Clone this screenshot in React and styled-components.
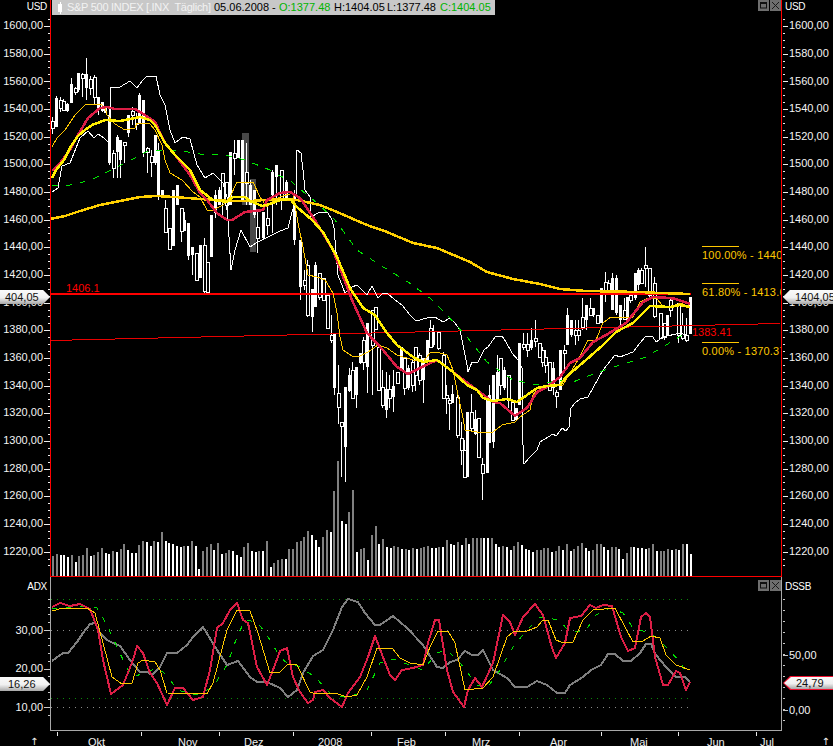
import React from 'react';
import styled, { createGlobalStyle } from 'styled-components';

const Global = createGlobalStyle`
  html, body { margin: 0; padding: 0; background: #000; overflow: hidden; }
  body { font-family: "Liberation Sans", Arial, sans-serif; font-size: 11px; color: #fff; }
`;

/* ---------- data (page pixel coordinates) ---------- */
const pts = (a) => a.map((p) => p.join(',')).join(' ');

const whiteBand = [[52,192],[58,188],[62,166],[70,163],[76,148],[80,138],[88,131],[94,138],[98,134],[104,138],[108,142],[110,130],[111,87],[120,87],[125,84],[130,81],[137,88],[143,80],[147,76],[156,76],[160,95],[165,105],[170,130],[175,143],[183,137],[190,139],[197,165],[205,178],[213,173],[223,183],[227,197],[228,220],[231,270],[235,250],[241,230],[250,247],[256,243],[266,238],[280,231],[288,228],[296,197],[297,150],[301,153],[303,170],[305,190],[310,197],[311,217],[320,212],[328,213],[332,220],[334,228],[335,240],[338,275],[345,293],[352,287],[357,285],[362,290],[367,295],[372,286],[378,298],[383,293],[387,293],[395,300],[402,305],[410,315],[415,320],[420,320],[430,317],[435,317],[443,322],[450,318],[455,323],[460,330],[463,345],[467,365],[468,372],[472,362],[478,362],[484,350],[488,347],[495,337],[502,336],[506,342],[512,353],[518,360],[522,368],[522,425],[524,464],[530,457],[537,450],[540,442],[548,437],[553,434],[556,436],[560,431],[562,428],[566,431],[569,427],[571,408],[575,403],[580,399],[584,398],[588,397],[603,370],[615,355],[620,357],[633,352],[640,343],[646,336],[653,337],[656,342],[663,337],[680,333],[686,335]];
const ma200 = [[50,219],[55,218],[65,216],[80,211],[100,205],[120,201],[140,197],[156,196],[175,197],[200,199],[230,201],[250,201],[280,199],[297,200],[320,205],[337,212],[367,225],[387,232],[413,243],[437,248],[470,262],[487,272],[513,279],[540,284],[560,289],[586,291],[640,292],[660,293],[690,294]];
const yellowMa = [[52,178],[56,170],[64,160],[70,148],[78,136],[85,130],[92,125],[100,122],[105,120],[120,121],[130,119],[140,117],[150,120],[155,125],[165,143],[175,155],[190,170],[200,190],[213,200],[227,202],[233,197],[245,197],[250,201],[262,206],[270,204],[280,200],[290,199],[297,207],[312,220],[323,232],[337,257],[350,288],[363,308],[375,315],[387,333],[397,345],[413,357],[423,362],[437,360],[453,372],[467,385],[477,390],[483,398],[493,401],[507,399],[517,402],[537,388],[547,386],[560,385],[566,377],[586,360],[603,345],[616,332],[633,323],[650,306],[670,307],[680,305],[690,307]];
const redMa = [[52,171],[60,163],[70,150],[78,135],[88,118],[100,108],[107,107],[115,109],[135,109],[145,115],[155,122],[165,143],[175,155],[190,175],[200,193],[207,200],[217,213],[227,220],[232,220],[245,212],[263,210],[267,200],[280,193],[290,192],[300,198],[313,217],[333,250],[352,300],[367,333],[383,350],[397,367],[408,374],[420,368],[437,360],[453,372],[477,390],[493,402],[500,403],[515,416],[527,408],[537,392],[547,387],[560,377],[570,363],[580,358],[593,342],[606,335],[626,323],[643,302],[653,297],[670,298],[676,299],[690,304]];
const goldThin = [[52,147],[57,138],[65,130],[75,115],[85,105],[100,104],[105,107],[107,115],[115,124],[125,130],[135,128],[137,123],[140,123],[150,124],[155,130],[162,145],[165,160],[170,173],[182,180],[193,192],[200,197],[207,210],[213,210],[223,205],[230,197],[237,182],[253,182],[260,197],[267,207],[275,200],[280,197],[293,193],[298,223],[303,247],[308,275],[317,277],[325,280],[333,293],[337,313],[340,337],[343,350],[352,356],[360,356],[368,352],[378,345],[387,348],[397,355],[413,360],[423,362],[430,353],[437,352],[447,355],[453,370],[457,390],[463,418],[465,430],[477,432],[493,432],[502,425],[515,422],[520,417],[530,410],[533,395],[538,387],[563,385],[578,360],[588,340],[596,340],[603,323],[611,317],[633,317],[640,302],[648,298],[656,298],[663,306],[671,307],[680,303],[690,307]];
const greenMa = [[52,185],[65,186],[80,183],[95,178],[115,168],[135,158],[150,150],[175,150],[200,154],[225,155],[245,160],[270,170],[280,176],[290,180],[297,187],[305,193],[317,203],[335,220],[357,250],[380,265],[408,282],[430,298],[447,315],[467,337],[487,362],[513,380],[537,385],[560,380],[573,382],[596,373],[620,365],[646,357],[666,345],[686,333]];
const adxGray = [[52,661],[63,653],[68,653],[77,642],[83,633],[90,624],[95,623],[100,633],[107,640],[113,643],[120,646],[130,660],[140,672],[147,672],[152,675],[160,667],[167,653],[177,653],[187,645],[193,637],[203,627],[217,650],[227,665],[238,661],[250,677],[257,682],[267,682],[280,688],[288,697],[297,690],[303,673],[313,656],[323,650],[333,630],[342,607],[348,599],[358,602],[365,613],[375,625],[380,625],[393,616],[407,628],[423,645],[437,667],[443,668],[450,662],[457,660],[465,651],[472,655],[478,655],[483,650],[493,670],[507,678],[515,687],[527,687],[537,681],[547,685],[557,693],[565,693],[570,685],[583,677],[591,670],[601,665],[608,654],[615,654],[623,661],[631,661],[640,653],[646,644],[651,644],[656,655],[666,667],[676,677],[685,677],[690,682]];
const adxRed = [[52,607],[60,603],[70,606],[80,604],[90,609],[98,630],[103,660],[111,694],[123,685],[133,660],[137,646],[143,653],[150,673],[157,683],[167,705],[175,688],[183,688],[193,700],[203,697],[210,670],[217,628],[223,623],[230,610],[237,603],[243,620],[248,623],[257,667],[267,685],[273,670],[280,651],[287,648],[293,677],[300,692],[308,703],[313,700],[315,692],[323,690],[330,698],[342,707],[348,693],[360,677],[368,657],[375,636],[383,657],[390,675],[395,680],[402,670],[413,668],[423,665],[428,643],[435,620],[439,620],[447,670],[453,692],[464,707],[468,690],[475,678],[482,687],[493,663],[503,615],[510,622],[515,635],[523,617],[535,604],[543,615],[552,648],[556,658],[565,643],[570,618],[581,616],[590,605],[596,608],[603,605],[612,606],[621,637],[628,651],[635,648],[641,617],[646,613],[650,617],[655,657],[663,685],[668,685],[676,671],[680,673],[686,690],[690,682]];
const adxGold = [[52,611],[63,608],[87,608],[95,613],[103,643],[112,677],[122,684],[132,683],[138,663],[143,660],[155,662],[160,670],[167,693],[207,694],[213,683],[227,630],[237,610],[250,611],[258,633],[270,673],[280,672],[288,664],[297,665],[310,692],[313,693],[335,693],[347,697],[357,695],[367,677],[377,648],[392,648],[400,658],[410,663],[423,665],[430,647],[438,631],[448,631],[455,643],[465,690],[483,688],[493,677],[507,637],[513,632],[527,631],[537,627],[543,620],[548,620],[556,640],[561,642],[573,642],[583,620],[593,610],[615,608],[625,627],[633,642],[643,641],[651,636],[660,638],[666,655],[676,665],[690,670]];
const adxGreen = [[52,609],[83,606],[97,608],[107,625],[117,647],[127,668],[133,677],[147,672],[157,668],[167,675],[177,690],[197,695],[213,687],[227,665],[237,637],[245,620],[257,622],[267,635],[280,657],[287,663],[300,667],[315,677],[330,693],[347,698],[367,690],[380,663],[393,659],[410,665],[423,670],[437,653],[447,650],[460,663],[477,685],[487,688],[500,670],[513,647],[527,630],[540,617],[560,620],[566,628],[575,632],[586,630],[596,615],[610,608],[623,613],[633,628],[646,632],[653,635],[666,647],[681,663],[688,677]];

/* x, high, low, bodyTop, bodyBottom, filled */
const candles = [
[52,117,134,121,128,0],[56,96,127,98,127,1],[60,97,112,100,108,0],[63,99,111,101,110,0],[67,103,112,104,111,1],[71,78,103,84,103,1],[75,87,95,88,92,0],[78,73,92,73,90,1],[82,73,97,74,78,0],[86,58,100,74,88,1],[90,76,95,79,88,0],[94,75,105,77,97,0],[98,97,115,97,108,1],[102,102,112,102,111,1],[105,107,113,107,113,1],[109,107,165,115,163,1],[113,150,178,153,168,0],[117,135,178,137,152,1],[120,140,178,140,160,1],[124,142,163,142,145,0],[128,115,137,115,133,1],[132,107,125,111,115,0],[136,113,130,118,124,0],[139,93,123,95,123,1],[143,100,157,100,153,1],[147,147,173,148,152,0],[151,150,177,156,162,0],[155,135,165,135,163,1],[158,143,200,150,195,1],[162,190,197,190,196,1],[165,200,232,208,232,0],[169,228,249,228,249,0],[173,190,246,190,246,1],[177,185,205,185,205,1],[181,208,242,208,231,0],[184,212,231,220,231,1],[188,223,260,223,256,1],[192,247,275,247,255,1],[196,253,280,253,280,0],[200,245,278,245,278,1],[204,238,293,245,291,0],[207,262,292,262,292,0],[211,215,257,215,257,1],[215,190,218,195,213,1],[219,187,205,190,205,1],[222,173,215,173,200,0],[226,182,210,182,205,0],[230,152,205,152,205,1],[234,140,175,153,158,0],[238,140,158,140,158,1],[242,140,200,140,200,1],[246,143,205,172,183,0],[250,180,205,185,205,1],[254,190,218,190,215,1],
[257,212,253,227,238,0],[263,212,240,212,238,1],[267,205,235,218,225,0],[272,170,233,172,195,1],[276,165,205,165,177,1],[281,170,210,170,200,0],[286,180,200,182,198,1],
[294,190,245,208,240,1],[300,240,300,240,287,1],[304,270,290,280,285,0],[307,260,317,265,315,0],[312,289,332,289,317,1],[315,262,307,265,307,1],[319,273,300,273,297,0],[323,278,300,278,300,0],[327,295,328,295,328,0],[331,315,343,335,340,0],
[334,333,395,333,388,1],[338,365,424,393,407,0],[341,422,477,422,426,0],[345,387,482,387,447,1],[349,368,392,375,391,1],[352,362,399,370,398,0],[356,367,408,367,395,1],[360,353,364,353,363,1],[363,337,370,340,362,0],[367,323,393,323,367,1],[372,310,395,310,345,0],[375,307,330,307,329,0],[378,347,391,347,390,0],[382,370,408,387,405,0],[386,372,418,389,410,1],[389,375,408,389,398,0],[393,370,412,386,397,1],[397,372,383,372,383,0],[401,347,370,347,370,1],[404,357,395,358,388,0],[408,365,390,368,388,1],[412,360,392,362,385,0],[415,347,391,347,375,0],[419,353,385,355,380,0],[423,358,403,358,380,1],[427,340,360,340,360,1],[430,320,347,328,347,0],[433,325,347,331,345,1],[438,332,350,332,348,0],[443,352,398,355,398,0],[446,385,414,395,398,0],[449,398,430,400,403,0],[452,385,403,394,403,1],[457,395,438,397,435,0],[461,422,465,438,450,0],[464,440,478,450,477,0],[467,412,477,412,477,1],[471,394,432,412,428,0],[475,410,435,419,434,1],[478,418,458,418,457,0],[482,458,500,464,473,0],[487,398,473,400,473,1],[489,385,443,395,443,1],[493,375,448,375,442,1],[497,355,400,372,400,1],[500,358,395,358,385,0],[504,367,390,370,388,1],[508,375,408,375,400,0],[512,402,420,402,420,0],[516,408,420,408,420,1],[519,343,405,343,405,1],[523,333,350,344,347,0],[527,333,357,344,350,0],[531,328,350,340,348,1],[535,320,347,338,341,0],[539,343,357,343,357,0],[542,347,367,350,362,0],[545,350,373,357,365,0],[549,362,390,362,390,0],[553,362,395,368,388,1],[556,390,408,392,396,0],[560,350,390,350,390,1],[564,345,370,350,353,0],[567,308,345,315,345,1],[571,320,337,320,335,1],[575,320,345,330,335,0],[578,320,341,330,335,0],[582,298,330,317,327,0],[586,305,330,305,320,1],[590,298,315,308,315,0],[593,308,317,308,315,1],[597,315,323,315,323,0],[601,288,323,288,323,1],[605,272,302,282,290,0],[608,280,295,283,291,0],[612,273,310,278,310,1],[616,275,315,278,313,1],[620,305,327,305,320,1],[624,298,320,310,319,0],[627,297,323,297,320,1],[630,295,303,295,300,0],[635,273,300,273,298,1],[638,268,290,270,285,1],[641,268,283,270,283,0],[645,247,287,265,268,0],[649,268,297,268,295,0],[654,277,318,283,316,0],[660,313,338,313,338,0],[664,323,340,323,337,0],[667,315,335,315,335,1],[670,297,317,300,310,0],[678,303,343,303,335,0],[682,313,340,325,338,0],[686,318,342,335,340,0],[690,297,334,297,334,1],
];

const volumes = `513g 507g 510w 510w 516w 510g 531w 514g 510g 489g 513w 510g 501g 489g 504w 507w 498g 501w 492g 477g 495w 504w 504w 480g 468g 471w 483w 468g 471w 441g 468w 474w 477w 483w 486w 483g 483w 468g 483w 552w 498g 486g 477g 495w 474g 507w 504g 495g 498w 510w 516w 486g 474g 498w 501w 498g 498w 468g 546w 534g
525g 522g 522w 492g 492g 471g 468g 456g 438g 450w 465w 486w 456g 435g 441w 318g 228g 408w 417w 381g 315g 501w 492g 489g 525w 450g 423g 477w 462g 486w 489w 483g 486g 492w 492g 495w 489g 492w 489g 486g 483g 489w 489w 486g 486w 465g 477w 480w 471g 480w 459g 477w 459g 459g 459g 459w 459w 459g 477w 486w 483g 486w 495w 483g 471g 480w 492w 495w 501w 495g 495g 489g 489g 501w
498g 483g 495w 477g 498w 492g 483g 474g 489w 498w 495g 477g 477g 486w 495w 486g 486g 492w 522w 504g 486g 486w 489w 489w 492w 489g 477g 498w 498g 498g 492g 495w 492g 495w 477g 477w 507w`
  .split(/\s+/)
  .map((s) => ({ y: 385 + parseInt(s, 10) / 3, white: s.endsWith('w') }));

const range = (from, to, step) => {
  const out = [];
  for (let v = from; v <= to + 0.01; v += step) out.push(v);
  return out;
};

const priceLabels = range(0, 19, 1).map((i) => `${1600 - i * 20},00`);

const months = [
  { label: 'Okt', w: 84, left: 31 },
  { label: 'Nov', w: 78, left: 37 },
  { label: 'Dez', w: 74, left: 25 },
  { label: '2008', w: 78, left: 25 },
  { label: 'Feb', w: 74, left: 26 },
  { label: 'Mrz', w: 74, left: 27 },
  { label: 'Apr', w: 82, left: 31 },
  { label: 'Mai', w: 77, left: 29 },
  { label: 'Jun', w: 78, left: 29 },
];

/* ---------- layout ---------- */
const Page = styled.div`
  width: 833px;
  height: 746px;
  background: #000;
  overflow: hidden;
  display: flex;
  flex-direction: column;
`;
const PaneRow = styled.div`
  display: flex;
  height: ${(p) => p.$height}px;
  flex: none;
`;
const Axis = styled.div`
  position: relative;
  flex: none;
  width: ${(p) => p.$width}px;
  display: flex;
  flex-direction: ${(p) => (p.$right ? 'row' : 'row-reverse')};
`;
const Labels = styled.div`
  flex: 1;
  display: flex;
  flex-direction: column;
  min-width: 0;
`;
const AxisTitle = styled.div`
  height: ${(p) => p.$offset}px;
  line-height: ${(p) => p.$line}px;
  flex: none;
  white-space: nowrap;
  font-size: 10px;
  letter-spacing: -0.3px;
  text-align: ${(p) => (p.$right ? 'left' : 'right')};
  margin: ${(p) => (p.$right ? '0 0 0 -3px' : '0 -3px 0 0')};
`;
const AxisLabel = styled.div`
  height: ${(p) => p.$step}px;
  line-height: ${(p) => p.$step}px;
  flex: none;
  white-space: nowrap;
  color: #f4f4f4;
  text-align: ${(p) => (p.$right ? 'left' : 'right')};
  padding: ${(p) => (p.$right ? '0 0 0 1px' : '0 1px 0 0')};
`;
const TickStrip = styled.svg`
  display: block;
  flex: none;
  width: 6px;
  height: 100%;
`;
const Plot = styled.div`
  position: relative;
  flex: none;
  width: 732px;
  box-sizing: border-box;
  overflow: hidden;
  border-left: 1px solid ${(p) => p.$line};
  border-right: 1px solid ${(p) => p.$line};
  border-bottom: 1px solid ${(p) => p.$line};
`;
const ChartSvg = styled.svg`
  display: block;
  width: 730px;
  height: 100%;
  shape-rendering: crispEdges;
  text {
    font-family: "Liberation Sans", Arial, sans-serif;
    font-size: 11px;
  }
`;
const FibText = styled.text`
  fill: #ffc800;
  letter-spacing: 0.2px;
`;
const Toolbar = styled.div`
  position: absolute;
  left: 1px;
  top: 0;
  width: 443px;
  height: 15px;
  background: #c8c8c8;
  display: flex;
  align-items: center;
  line-height: 15px;
  white-space: pre;
  color: #000;
`;
const CandleIcon = styled.span`
  position: relative;
  flex: none;
  width: 4px;
  height: 8px;
  margin: 0 5px 0 6px;
  background: #fff;
  &::before {
    content: '';
    position: absolute;
    left: 1.5px;
    top: -2px;
    width: 1px;
    height: 12px;
    background: #fff;
  }
`;
const Seg = styled.span`
  flex: none;
  color: ${(p) => p.$color || '#000'};
  width: ${(p) => p.$width}px;
  letter-spacing: ${(p) => p.$track || 0}px;
`;
const WindowButtons = styled.div`
  position: absolute;
  right: 0;
  top: ${(p) => p.$top}px;
  display: flex;
  gap: 1px;
`;
const WinButton = styled.div`
  width: 11px;
  height: 11px;
  background: #6e6e6e;
  display: flex;
  align-items: center;
  justify-content: center;
`;
const Tag = styled.div`
  position: absolute;
  top: ${(p) => p.$top}px;
  ${(p) => (p.$right ? 'right: 0;' : 'left: 0;')}
  z-index: 2;
  width: 50px;
  height: 14px;
  background: ${(p) => (p.$ring ? '#f01030' : 'linear-gradient(#fafafa, #f0f0f0 55%, #a8a8a8)')};
  clip-path: ${(p) =>
    p.$right
      ? 'polygon(7px 0, 100% 0, 100% 100%, 7px 100%, 0 50%)'
      : 'polygon(0 0, calc(100% - 7px) 0, 100% 50%, calc(100% - 7px) 100%, 0 100%)'};
  overflow: hidden;
`;
const TagInner = styled.div`
  position: absolute;
  inset: ${(p) => (p.$ring ? '1px 0 1px 1px' : '0')};
  background: linear-gradient(#fafafa, #f0f0f0 55%, #a8a8a8);
  clip-path: ${(p) =>
    p.$right
      ? 'polygon(7px 0, 100% 0, 100% 100%, 7px 100%, 0 50%)'
      : 'polygon(0 0, calc(100% - 7px) 0, 100% 50%, calc(100% - 7px) 100%, 0 100%)'};
  color: #111;
  white-space: nowrap;
  line-height: ${(p) => (p.$ring ? 12 : 14)}px;
  padding-left: ${(p) => p.$pad}px;
`;
const TimeAxis = styled.div`
  flex: 1;
  display: flex;
  line-height: 22px;
  color: #f0f0f0;
`;
const ArrowCell = styled.div`
  flex: none;
  width: ${(p) => p.$w}px;
  padding-left: ${(p) => p.$pad}px;
  box-sizing: border-box;
  font-family: "DejaVu Sans", sans-serif;
  font-size: 10px;
  display: flex;
  justify-content: ${(p) => (p.$end ? 'flex-end' : 'flex-start')};
`;
const MonthCell = styled.div`
  position: relative;
  flex: none;
  width: ${(p) => p.$w}px;
  padding-left: ${(p) => p.$left}px;
  box-sizing: border-box;
  white-space: nowrap;
  &::before {
    content: '';
    position: absolute;
    left: 0;
    top: 1px;
    width: 1px;
    height: 4px;
    background: #e8e8e8;
  }
`;

/* ---------- parts ---------- */
const Ticks = ({ y0, height, minors, majors, right, color }) => (
  <TickStrip viewBox={`0 ${y0} 6 ${height}`} preserveAspectRatio="none" shapeRendering="crispEdges">
    {minors.map((y) => (
      <rect key={y} x={right ? 1 : 4} y={Math.round(y)} width="2" height="1" fill={color} />
    ))}
    {majors.map((y) => (
      <rect key={y} x={right ? 1 : 0} y={Math.round(y)} width="5" height="1" fill={color} />
    ))}
  </TickStrip>
);

const Buttons = ({ top }) => (
  <WindowButtons $top={top}>
    <WinButton>
      <svg width="9" height="9" viewBox="0 0 9 9">
        <rect x="1.5" y="2" width="6" height="5" fill="none" stroke="#111" strokeWidth="1" />
        <rect x="1" y="1" width="7" height="2" fill="#111" />
      </svg>
    </WinButton>
    <WinButton>
      <svg width="9" height="9" viewBox="0 0 9 9">
        <path d="M1 1 L8 8 M8 1 L1 8" stroke="#1a1a1a" strokeWidth="1" fill="none" />
      </svg>
    </WinButton>
  </WindowButtons>
);

const Line = ({ data, color, width = 1, dash }) => (
  <polyline points={pts(data)} fill="none" stroke={color} strokeWidth={width} strokeDasharray={dash} strokeLinejoin="round" />
);

const Candle = ({ c: [x, hi, lo, bt, bb, filled] }) => (
  <g>
    <rect x={x} y={hi} width="1" height={lo - hi} fill="#fff" />
    <rect x={x - 1} y={bt} width="3" height={Math.max(bb - bt, 1)} fill={filled ? '#fff' : '#000'} stroke={filled ? 'none' : '#fff'} strokeWidth={filled ? 0 : 1} />
  </g>
);

const Dotted = ({ y, color }) => (
  <line x1="51" x2="691" y1={y} y2={y} stroke={color} strokeWidth="1" strokeDasharray="1 5" />
);

const volumeStep = (689.7 - 52) / (volumes.length - 1);

export default function App() {
  return (
    <Page>
      <Global />
      <PaneRow $height={577}>
        <Axis $width={50}>
          <Ticks y0={0} height={577} minors={range(19, 566, 6.917)} majors={range(26, 552, 27.67)} color="#eee" />
          <Labels>
            <AxisTitle $offset={12.2} $line={14}>USD</AxisTitle>
            {priceLabels.map((l) => (
              <AxisLabel key={l} $step={27.67}>{l}</AxisLabel>
            ))}
          </Labels>
          <Tag $top={290}><TagInner $pad={5}>404,05</TagInner></Tag>
        </Axis>
        <Plot $line="#ff0000">
          <ChartSvg viewBox="51 0 730 576" preserveAspectRatio="none">
            <rect x="242" y="133" width="7" height="72" fill="#484848" />
            <rect x="250" y="179" width="6" height="73" fill="#484848" />
            {candles.map((c, i) => <Candle key={i} c={c} />)}
            {volumes.map((v, i) => (
              <rect key={i} x={Math.round(52 + i * volumeStep)} y={v.y} width="2" height={576 - v.y} fill={v.white ? '#fff' : '#808080'} />
            ))}
            <Line data={[[51,340.5],[780,323.5]]} color="#e80000" />
            <line x1="51" x2="691" y1="294" y2="294" stroke="#ff0000" strokeWidth="1.6" />
            <text x="66" y="292" fill="#ff0000">1406.1</text>
            <Line data={whiteBand} color="#fff" />
            <Line data={greenMa} color="#00e800" dash="6 8" />
            <Line data={goldThin} color="#ffc800" />
            <Line data={ma200} color="#ffd000" width={2.5} />
            <Line data={redMa} color="#dc1e46" width={2.5} />
            <Line data={yellowMa} color="#ffee00" width={2.5} />
            <line x1="702" x2="739" y1="246" y2="246" stroke="#ffc800" />
            <line x1="702" x2="739" y1="283" y2="283" stroke="#ffc800" />
            <line x1="702" x2="739" y1="342" y2="342" stroke="#ffc800" />
            <FibText x="702" y="259">100.00% - 1440</FibText>
            <FibText x="702" y="296">61.80% - 1413.6</FibText>
            <FibText x="702" y="355">0.00% - 1370.37</FibText>
            <text x="692" y="336" fill="#ff0000">1383.41</text>
          </ChartSvg>
          <Toolbar>
            <CandleIcon />
            <Seg $color="#f2f2f2" $width={147} $track={-0.28}>S&amp;P 500 INDEX [.INX  Täglich]</Seg>
            <Seg $width={65}>05.06.2008 - </Seg>
            <Seg $color="#00b400" $width={55}>O:1377.48</Seg>
            <Seg $width={53}>H:1404.05</Seg>
            <Seg $width={53}>L:1377.48</Seg>
            <Seg $color="#00b400">C:1404.05</Seg>
          </Toolbar>
          <Buttons top={0} />
        </Plot>
        <Axis $width={51} $right>
          <Ticks y0={0} height={577} minors={range(19, 566, 6.917)} majors={range(26, 552, 27.67)} right color="#eee" />
          <Labels>
            <AxisTitle $offset={12.2} $line={14} $right>USD</AxisTitle>
            {priceLabels.map((l) => (
              <AxisLabel key={l} $step={27.67} $right>{l}</AxisLabel>
            ))}
          </Labels>
          <Tag $top={290} $right><TagInner $right $pad={12}>1404,05</TagInner></Tag>
        </Axis>
      </PaneRow>
      <PaneRow $height={154}>
        <Axis $width={50}>
          <Ticks y0={577} height={154} minors={range(599, 722, 7.73)} majors={[630, 669, 707]} color="#c8c8c8" />
          <Labels>
            <AxisTitle $offset={33.67} $line={20}>ADX</AxisTitle>
            {['30,00', '20,00', '10,00'].map((l) => (
              <AxisLabel key={l} $step={38.67}>{l}</AxisLabel>
            ))}
          </Labels>
          <Tag $top={100}><TagInner $pad={8}>16,26</TagInner></Tag>
        </Axis>
        <Plot $line="#a8a8a8">
          <ChartSvg viewBox="51 577 730 153" preserveAspectRatio="none">
            <Dotted y={599} color="#0a8a0a" />
            <Dotted y={698} color="#0a8a0a" />
            <Dotted y={630} color="#8a8a8a" />
            <Dotted y={707} color="#8a8a8a" />
            <Line data={adxGray} color="#808080" width={2} />
            <Line data={adxGreen} color="#00e000" dash="5 9" />
            <Line data={adxRed} color="#dc1e46" width={2} />
            <Line data={adxGold} color="#ffc800" />
          </ChartSvg>
          <Buttons top={3} />
        </Plot>
        <Axis $width={51} $right>
          <Ticks y0={577} height={154} minors={range(599, 721, 11)} majors={[655, 710]} right color="#c8c8c8" />
          <Labels>
            <AxisTitle $offset={50.5} $line={20} $right>DSSB</AxisTitle>
            {['50,00', '0,00'].map((l) => (
              <AxisLabel key={l} $step={55} $right>{l}</AxisLabel>
            ))}
          </Labels>
          <Tag $top={99} $right $ring><TagInner $ring $right $pad={12}>24,79</TagInner></Tag>
        </Axis>
      </PaneRow>
      <TimeAxis>
        <ArrowCell $w={57} $pad={30}>↑</ArrowCell>
        {months.map((m) => (
          <MonthCell key={m.label} $w={m.w} $left={m.left}>{m.label}</MonthCell>
        ))}
        <MonthCell $w={4} $left={4}>Jul</MonthCell>
        <ArrowCell $w={73} $pad={0} $end>↑&nbsp;</ArrowCell>
      </TimeAxis>
    </Page>
  );
}
